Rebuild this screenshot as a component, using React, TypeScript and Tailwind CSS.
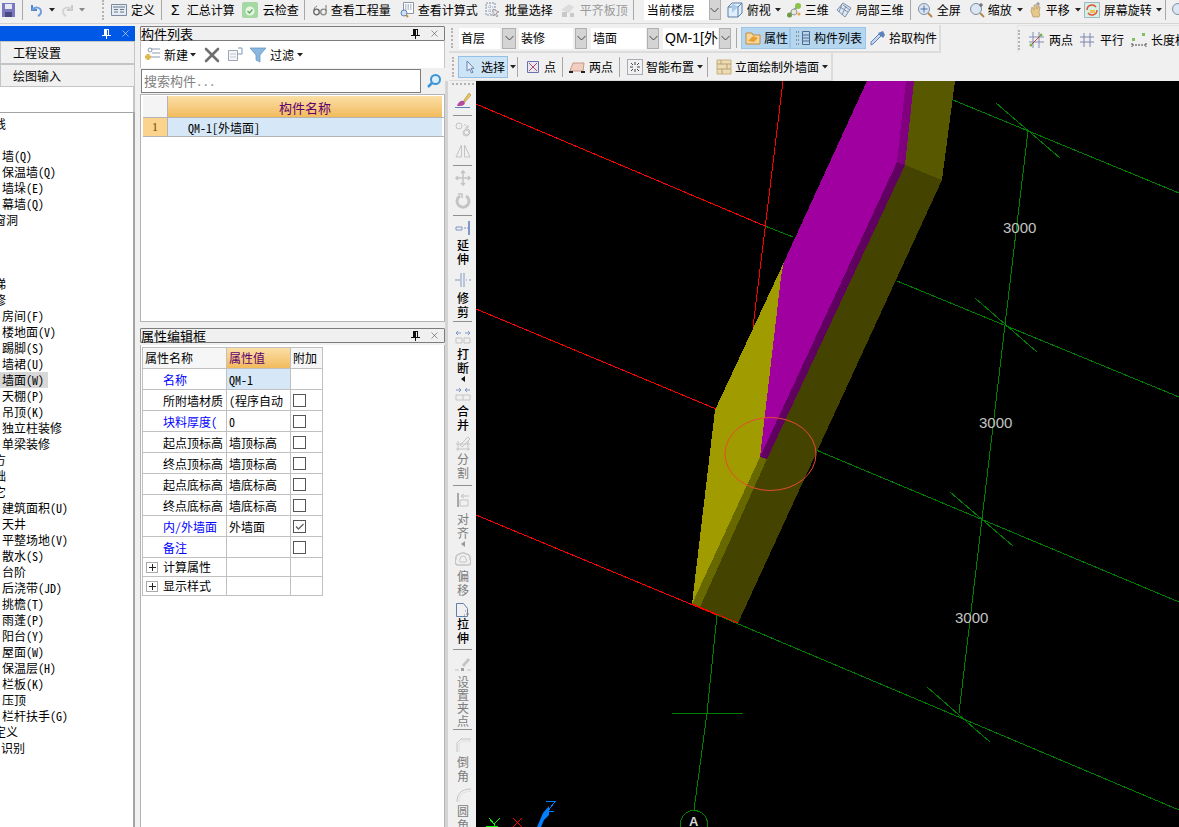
import React from "react";
import { X } from "lucide-react";

type IconProps = { className?: string };

// small helpers for the toolbar drawings
function Ico({ className = "", children }: { className?: string; children: React.ReactNode }) {
  return (
    <svg viewBox="0 0 16 16" className={"w-4 h-4 shrink-0 " + className} fill="none">
      {children}
    </svg>
  );
}

function Caret({ className = "" }: IconProps) {
  return (
    <svg viewBox="0 0 6 4" className={"w-[6px] h-[4px] shrink-0 " + className}>
      <path d="M0 0h6L3 3.5z" fill="#222" />
    </svg>
  );
}

function Sep({ className = "" }: IconProps) {
  return <div className={"w-px h-[20px] bg-[#a8a8a8] shrink-0 " + className} />;
}

function Grip({ className = "" }: IconProps) {
  return <div className={"w-0 h-[20px] border-l-2 border-dotted border-[#b4b4b4] shrink-0 " + className} />;
}

function Pin({ light }: { light?: boolean }) {
  const c = light ? "#fff" : "#111";
  return (
    <svg viewBox="0 0 9 10" className="w-[9px] h-[10px]">
      <path d="M2 0h5v6H2zM0 6h9v1H0zM4 7h1v3H4z" fill={c} />
      <path d="M5 1h1v5H5z" fill={light ? "#0058e6" : "#f0f0f0"} />
    </svg>
  );
}

function Chevron({ className = "" }: IconProps) {
  return (
    <div className={"h-[21px] bg-[#d4d4d4] border border-[#b0b0b0] flex items-center justify-center shrink-0 " + className}>
      <svg viewBox="0 0 9 6" className="w-[9px] h-[6px]">
        <path d="M.5 1l4 4 4-4" stroke="#444" fill="none" />
      </svg>
    </div>
  );
}

const LookGlass = ({ className = "", inner }: { className?: string; inner?: React.ReactNode }) => (
  <Ico className={className}>
    <circle cx="7" cy="7" r="5.5" fill="#dce6f2" stroke="#7c8ea8" />
    <path d="M11 11l4 4" stroke="#b08850" strokeWidth="2" />
    {inner}
  </Ico>
);

const treeRows: [string, number][] = [
  ["线", -6], ["", 0], ["墙(Q)", 2], ["保温墙(Q)", 2], ["墙垛(E)", 2], ["幕墙(Q)", 2], ["窗洞", -6], ["", 0], ["", 0], ["", 0],
  ["梯", -6], ["修", -6], ["房间(F)", 2], ["楼地面(V)", 2], ["踢脚(S)", 2], ["墙裙(U)", 2], ["墙面(W)", 2], ["天棚(P)", 2], ["吊顶(K)", 2],
  ["独立柱装修", 2], ["单梁装修", 2], ["方", -6], ["础", -6], ["它", -6], ["建筑面积(U)", 2], ["天井", 2], ["平整场地(V)", 2], ["散水(S)", 2],
  ["台阶", 2], ["后浇带(JD)", 2], ["挑檐(T)", 2], ["雨蓬(P)", 2], ["阳台(Y)", 2], ["屋面(W)", 2], ["保温层(H)", 2], ["栏板(K)", 2], ["压顶", 2],
  ["栏杆扶手(G)", 2], ["定义", -6], ["识别", 1],
];

const props = [
  { name: "名称", value: "QM-1", blue: true, active: true },
  { name: "所附墙材质", value: "(程序自动", box: true },
  { name: "块料厚度(", value: "0", blue: true, box: true },
  { name: "起点顶标高", value: "墙顶标高", box: true },
  { name: "终点顶标高", value: "墙顶标高", box: true },
  { name: "起点底标高", value: "墙底标高", box: true },
  { name: "终点底标高", value: "墙底标高", box: true },
  { name: "内/外墙面", value: "外墙面", blue: true, box: true, checked: true },
  { name: "备注", value: "", blue: true, box: true },
];

function TopBar() {
  return (
    <div className="h-[24px] flex items-center pb-[4px] border-b border-[#d4d4d4] shrink-0 whitespace-nowrap overflow-hidden">
      <svg viewBox="0 0 13 14" className="w-[13px] h-[14px] ml-[2px] shrink-0">
        <path d="M0 0h13v14H0z" fill="#7a78c0" />
        <path d="M3 1h7v5H3z" fill="#e8e8f4" />
        <path d="M3 9h7v5H3z" fill="#4a4a80" />
      </svg>
      <Sep className="ml-[7px]" />
      <Ico className="ml-[6px]">
        <path d="M3 3v5h5" stroke="#4f86cf" strokeWidth="2" />
        <path d="M3 8c3-4 9-3 9 2 0 2-1 3-3 4" stroke="#6f9ede" strokeWidth="2" />
      </Ico>
      <Caret className="ml-[4px]" />
      <Ico className="ml-[4px]">
        <path d="M13 3v5H8" stroke="#c8c8c8" strokeWidth="2" />
        <path d="M13 8c-3-4-9-3-9 2 0 2 1 3 3 4" stroke="#d4d4d4" strokeWidth="2" />
      </Ico>
      <Caret className="ml-[4px] opacity-50" />
      <Grip className="ml-[17px]" />
      <Ico className="ml-[7px]">
        <path d="M.5 2.5h15v11H.5z" fill="#e4eaf2" stroke="#7d8ba0" />
        <path d="M2 5h12M9 7.5h4M9 10h4M3 7.5h4M3 10h4" stroke="#66768e" />
      </Ico>
      <span className="ml-[4px]">定义</span>
      <Sep className="ml-[6px]" />
      <span className="ml-[9px] w-[10px] font-['Liberation_Sans'] text-[14px] leading-none">Σ</span>
      <span className="ml-[7px]">汇总计算</span>
      <Ico className="ml-[7px]">
        <path d="M0 2a2 2 0 012-2h12a2 2 0 012 2v12a2 2 0 01-2 2H2a2 2 0 01-2-2z" fill="#a6d8a4" />
        <circle cx="8" cy="9" r="4.5" fill="#e8f6e4" />
        <path d="M5.500 9l2 2 3-3.500" stroke="#62ad62" strokeWidth="1.500" />
      </Ico>
      <span className="ml-[5px]">云检查</span>
      <Sep className="ml-[5px]" />
      <Ico className="ml-[7px]">
        <circle cx="4.500" cy="10" r="2.800" stroke="#666" strokeWidth="1.300" />
        <circle cx="11.500" cy="10" r="2.800" stroke="#888" strokeWidth="1.300" />
        <path d="M2 9c0-3 1-4 3-5M14 9V3" stroke="#777" />
      </Ico>
      <span className="ml-[3px]">查看工程量</span>
      <Ico className="ml-[8px]">
        <path d="M4.500.5h10v11h-10z" fill="#fff" stroke="#8a94a8" />
        <path d="M6 3h7M6 5h7M6 7h7" stroke="#7c8ca6" strokeDasharray="1.500 1" />
        <circle cx="5" cy="11" r="3" fill="#cfe0f2" stroke="#5d85b8" />
        <path d="M7 13l2 2" stroke="#c0903a" strokeWidth="2" />
      </Ico>
      <span className="ml-[3px]">查看计算式</span>
      <Ico className="ml-[7px]">
        <path d="M1 1h9v12H1z" stroke="#8494b4" strokeDasharray="2 1" />
        <path d="M1 5h9M1 9h9M5 1v12" stroke="#9aa8c2" strokeDasharray="1 1" />
        <path d="M8 7l6 3-3 1 2 3-1 1-2-3-2 2z" fill="#e6e6ee" stroke="#777" strokeWidth=".6" />
      </Ico>
      <span className="ml-[4px]">批量选择</span>
      <Ico className="ml-[7px]">
        <path d="M1 8l8-6 5 3-5 6z" fill="#dcdcdc" />
        <path d="M2 10h5v5H2zM10 11h4v4h-4z" fill="#c8c8c8" />
      </Ico>
      <span className="ml-[4px] text-[#9a9a9a]">平齐板顶</span>
      <Sep className="ml-[5px]" />
      <div className="ml-[10px] w-[65px] h-[21px] bg-white flex items-center pl-[3px] shrink-0">当前楼层</div>
      <Chevron className="w-[12px]" />
      <Ico className="ml-[6px]">
        <path d="M1 5l4-4h10v10l-4 4H1z" fill="#dfeefa" stroke="#5d7ea8" />
        <path d="M1 5h10v10M11 5l4-4" stroke="#5d7ea8" />
        <path d="M5 1l6 4-6 6z" fill="#a9cbe8" />
      </Ico>
      <span className="ml-[4px]">俯视</span>
      <Caret className="ml-[4px]" />
      <Ico className="ml-[5px]">
        <path d="M2 14L12 4" stroke="#999" strokeWidth="2" />
        <circle cx="12" cy="4" r="3" fill="#8bc34a" />
        <circle cx="3.500" cy="13" r="2.500" fill="#6d9a45" />
        <circle cx="8" cy="10" r="3" fill="#e8e8d8" stroke="#999" />
        <circle cx="13" cy="12" r="1.500" fill="#f0a040" />
      </Ico>
      <span className="ml-[3px]">三维</span>
      <Ico className="ml-[7px]">
        <path d="M1 8l6-7 8 5-6 9z" fill="#dfe8f2" stroke="#7d90aa" />
        <path d="M4 5l8 5M7 3l7 5M6 2l-3 8M10 4l-4 9" stroke="#7d90aa" />
      </Ico>
      <span className="ml-[4px]">局部三维</span>
      <Sep className="ml-[6px]" />
      <LookGlass className="ml-[6px]" inner={<path d="M7 3.500v7M3.500 7h7" stroke="#4a6ea8" />} />
      <span className="ml-[4px]">全屏</span>
      <LookGlass className="ml-[8px]" inner={<path d="M12 1v4M10 3h4" stroke="#555" />} />
      <span className="ml-[3px]">缩放</span>
      <Caret className="ml-[5px]" />
      <Ico className="ml-[5px]">
        <path d="M3 9l1-4 2 3V3l2 0 1 4 1-3 2 1-1 6 1 1-1 3H5z" fill="#e5c88a" stroke="#a88c58" strokeWidth=".6" />
        <path d="M10 0v4M8 2h4" stroke="#888" />
      </Ico>
      <span className="ml-[2px]">平移</span>
      <Caret className="ml-[5px]" />
      <Ico className="ml-[3px]">
        <path d="M.5.5h15v15H.5z" fill="#d6f0e0" stroke="#9bb8c8" />
        <path d="M3 8a5 5 0 019-3M13 8a5 5 0 01-9 3" stroke="#e0503c" strokeWidth="1.400" />
        <path d="M6 8h5v3H6z" fill="#f0c050" />
      </Ico>
      <span className="ml-[4px]">屏幕旋转</span>
      <Caret className="ml-[4px]" />
      <Sep className="ml-[3px]" />
      <LookGlass className="ml-[5px]" />
    </div>
  );
}

function LeftPanel() {
  return (
    <div className="w-[135px] shrink-0 flex flex-col pt-[2px]">
      <div className="h-[15px] bg-[#0058e6] flex items-center justify-end gap-[9px] pr-[4px] shrink-0">
        <Pin light />
        <X size={11} strokeWidth={1.2} color="#fff" />
      </div>
      <div className="h-[23px] flex items-center pl-[12px] border border-[#c4c4c4] shrink-0">工程设置</div>
      <div className="h-[23px] flex items-center pl-[12px] border border-[#c4c4c4] shrink-0">绘图输入</div>
      <div className="h-[25px] bg-white border-r-2 border-[#c4c4c4] shrink-0" />
      <div className="flex-1 bg-white border-t border-r-2 border-[#a4a4a4] pt-[3px] overflow-hidden">
        {treeRows.map(([label, x], i) =>
          label === "墙面(W)" ? (
            <div key={i} className="h-4 w-[48px] bg-[#d8d8d8] flex items-center pl-[2px] whitespace-nowrap">{label}</div>
          ) : (
            <div key={i} className="h-4 flex items-center whitespace-nowrap">
              {x === -6 && <span className="-ml-[6px]">{label}</span>}
              {x === 2 && <span className="ml-[2px]">{label}</span>}
              {x === 1 && <span className="ml-px">{label}</span>}
            </div>
          )
        )}
      </div>
    </div>
  );
}

function PanelTitle({ title }: { title: string }) {
  return (
    <div className="h-[15px] bg-[#f0f0f0] border border-[#7c7c7c] rounded-[1px] flex items-center justify-between pr-[4px] shrink-0">
      <span className="leading-none text-[13px]">{title}</span>
      <div className="flex items-center gap-[9px]">
        <Pin />
        <X size={11} strokeWidth={1.1} color="#333" />
      </div>
    </div>
  );
}

function MiddlePanel() {
  return (
    <div className="w-[305px] ml-[5px] shrink-0 flex flex-col pt-[2px]">
      <PanelTitle title="构件列表" />
      <div className="h-[27px] bg-white flex items-center shrink-0 border-x border-[#c4c4c4]">
        <Ico className="ml-[4px]">
          <path d="M6 2h9M7 6h8M6 10h9" stroke="#8b9ab0" />
          <circle cx="5" cy="3" r="2" stroke="#8b9ab0" />
          <path d="M3 7v6M0 10h6" stroke="#e0b84a" strokeWidth="3" />
        </Ico>
        <span className="ml-[3px]">新建</span>
        <Caret className="ml-[2px]" />
        <X size={24} strokeWidth={2.6} color="#707070" className="ml-[4px] shrink-0" />
        <Ico className="ml-[3px]">
          <path d="M1.500 3.500h9v10h-9z" stroke="#9aa4b4" fill="#f6f6f8" />
          <path d="M3 7h6M3 10h6" stroke="#c0c6d0" />
          <path d="M11 1h4v6h-4" stroke="#7f96bc" />
        </Ico>
        <svg viewBox="0 0 16 16" className="w-4 h-4 ml-[7px] shrink-0">
          <path d="M0 1h16l-6 7v7l-4-2V8z" fill="#8ab8de" stroke="#5d8ec0" strokeWidth=".7" />
        </svg>
        <span className="ml-[4px]">过滤</span>
        <Caret className="ml-[3px]" />
      </div>
      <div className="h-[26px] flex items-center shrink-0 bg-[#f0f0f0]">
        <div className="ml-px w-[280px] h-[24px] bg-white border border-[#7c7c7c] flex items-center pl-[2px] pb-[2px] text-[13px] text-[#808080]">搜索构件...</div>
        <svg viewBox="0 0 16 16" className="w-4 h-4 ml-[5px] shrink-0">
          <circle cx="9.500" cy="6.500" r="4.500" fill="#dceefa" stroke="#3f94d6" strokeWidth="2" />
          <path d="M6 10l-4 4" stroke="#3f94d6" strokeWidth="2.500" />
        </svg>
      </div>
      <div className="h-[228px] bg-white border border-[#b4b4b4] pl-[2px] pt-px shrink-0">
        <div className="flex h-[22px] border-b border-[#b4b4b4]">
          <div className="w-[25px] bg-[#f4f4f4] border-r border-[#b4b4b4]" />
          <div className="w-[274px] bg-gradient-to-b from-[#fbdfa6] to-[#f2bb5c] flex items-center justify-center pt-px text-[#5f0070] text-[13px]">构件名称</div>
        </div>
        <div className="flex h-[19px] border-b border-[#b4b4b4]">
          <div className="w-[25px] bg-[#fbd38d] border-r border-[#b4b4b4] flex items-center justify-center font-['Liberation_Serif'] text-[#6a4400]">1</div>
          <div className="w-[274px] bg-[#d6e8f7] flex items-center pl-[20px] pt-px">QM-1[外墙面]</div>
        </div>
      </div>
      <div className="h-[6px] shrink-0" />
      <PanelTitle title="属性编辑框" />
      <div className="flex-1 bg-white border-x border-[#b4b4b4] mt-[2px] pl-px pt-[2px] overflow-hidden">
        <div className="w-[181px] border-l border-t border-[#c0c0c0]">
          <div className="flex h-[21px] border-b border-[#c0c0c0]">
            <div className="w-[84px] bg-[#f6f6f6] border-r border-[#c0c0c0] flex items-center pl-[2px]">属性名称</div>
            <div className="w-[64px] bg-gradient-to-b from-[#fbdfa6] to-[#f2bb5c] border-r border-[#c0c0c0] flex items-center pl-[2px] text-[#5f0070]">属性值</div>
            <div className="w-[32px] bg-[#f6f6f6] border-r border-[#c0c0c0] flex items-center pl-[2px]">附加</div>
          </div>
          {props.map((p) => (
            <div key={p.name} className="flex h-[21px] border-b border-[#c0c0c0]">
              <div className={"w-[84px] border-r border-[#c0c0c0] flex items-center pl-[20px] pt-px whitespace-nowrap " + (p.blue ? "text-[#0000ff]" : "")}>{p.name}</div>
              <div className={"w-[64px] border-r border-[#c0c0c0] flex items-center pl-[2px] pt-px whitespace-nowrap overflow-hidden " + (p.active ? "bg-[#d6e8f7]" : "")}>{p.value}</div>
              <div className="w-[32px] border-r border-[#c0c0c0] flex items-center pl-[2px] pt-px">
                {p.box && (
                  <div className="w-[13px] h-[13px] border border-[#555] flex items-center justify-center">
                    {p.checked && (
                      <svg viewBox="0 0 11 11" className="w-[11px] h-[11px]">
                        <path d="M2 5.500l2.500 2.500 5-5" stroke="#666" strokeWidth="1.400" fill="none" />
                      </svg>
                    )}
                  </div>
                )}
              </div>
            </div>
          ))}
          {["计算属性", "显示样式"].map((n) => (
            <div key={n} className="flex h-[19px] border-b border-[#c0c0c0]">
              <div className="w-[84px] border-r border-[#c0c0c0] flex items-center pl-[3px]">
                <div className="w-[12px] h-[11px] border border-[#aaa] flex items-center justify-center leading-none">
                  <svg viewBox="0 0 7 7" className="w-[7px] h-[7px]">
                    <path d="M3 0h1v7H3zM0 3h7v1H0z" fill="#222" />
                  </svg>
                </div>
                <span className="ml-[5px]">{n}</span>
              </div>
              <div className="w-[64px] border-r border-[#c0c0c0]" />
              <div className="w-[32px] border-r border-[#c0c0c0]" />
            </div>
          ))}
        </div>
      </div>
    </div>
  );
}

function ToolRows() {
  return (
    <div className="shrink-0 whitespace-nowrap">
      <div className="h-[29px] flex pt-[1px] pl-[4px] overflow-hidden">
        <div className="w-[492px] h-[28px] flex items-center border-r-2 border-b-2 border-[#dcdcdc] shrink-0">
          <Grip className="ml-[2px]" />
          <div className="ml-[6px] w-[41px] h-[21px] bg-white flex items-center pl-[2px] shrink-0">首层</div>
          <Chevron className="ml-[2px] w-[14px]" />
          <div className="ml-[3px] w-[54px] h-[21px] bg-white flex items-center pl-[2px] shrink-0">装修</div>
          <Chevron className="ml-[2px] w-[12px]" />
          <div className="ml-[4px] w-[55px] h-[21px] bg-white flex items-center pl-[2px] shrink-0">墙面</div>
          <Chevron className="ml-px w-[12px]" />
          <div className="ml-[4px] w-[55px] h-[21px] bg-white flex items-center pl-[2px] shrink-0 font-['Liberation_Sans','Noto_Sans_CJK_SC',sans-serif] text-[14px]">QM-1[外</div>
          <Chevron className="ml-px w-[12px]" />
          <Sep className="ml-[5px]" />
          <div className="ml-[4px] w-[49px] h-[22px] bg-[#b5d6ef] border border-[#9cc6e8] flex items-center shrink-0">
            <Ico className="ml-[3px]">
              <path d="M1 3h6l1 2h7v9H1z" fill="#f4d8a0" stroke="#c88a3a" />
              <path d="M3 11l5-5 5 2-4 4z" fill="#e8a030" />
            </Ico>
            <span className="ml-[3px]">属性</span>
          </div>
          <div className="w-[76px] h-[22px] bg-[#b5d6ef] border border-[#9cc6e8] flex items-center shrink-0">
            <Ico className="ml-[4px]">
              <path d="M1 2h3M1 6h3M1 10h3M1 14h3" stroke="#555" strokeDasharray="1 1" />
              <path d="M7.500 1.500h7v13h-7zM8 5h6M8 8h6M8 11h6" stroke="#55698a" />
            </Ico>
            <span className="ml-[3px]">构件列表</span>
          </div>
          <svg viewBox="0 0 16 16" className="w-4 h-4 ml-[4px] shrink-0">
            <path d="M1 15l2-1 8-8-2-2-8 8z" fill="#c4d6ee" stroke="#5f83b8" />
            <path d="M8 3l5 5 2-3-2-4z" fill="#5f83b8" />
          </svg>
          <span className="ml-[3px]">拾取构件</span>
        </div>
        <div className="ml-[76px] flex-1 h-[28px] flex items-center border-l border-t border-[#e4e4e4]">
          <Grip />
          <Ico className="ml-[8px]">
            <path d="M1 10h15M1 5h15M5 0v16M11 0v16" stroke="#8090b8" />
            <path d="M2 14L14 2" stroke="#c04a3a" />
            <circle cx="3" cy="13" r="1.500" fill="#78b048" />
            <circle cx="13" cy="3" r="1.500" fill="#78b048" />
          </Ico>
          <span className="ml-[5px]">两点</span>
          <Ico className="ml-[7px]">
            <path d="M0 5h14M0 10h14M4 1v14M10 1v14" stroke="#7a84ac" />
          </Ico>
          <span className="ml-[4px]">平行</span>
          <Ico className="ml-[7px]">
            <path d="M1 11v4M15 11v4M1 13h14" stroke="#444" strokeDasharray="2 1" />
            <rect x="1" y="6" width="3" height="3" fill="#80c060" />
            <rect x="11" y="1" width="3" height="3" fill="#80c060" />
          </Ico>
          <span className="ml-[4px]">长度标注</span>
        </div>
      </div>
      <div className="h-[28px] pl-[4px] flex">
        <div className="w-[384px] h-[28px] flex items-center border-r-2 border-b border-[#dcdcdc] shrink-0">
          <Grip className="ml-[3px]" />
          <div className="ml-[4px] w-[50px] h-[22px] bg-[#cde4f7] border border-[#94c0e8] flex items-center pt-px shrink-0">
            <svg viewBox="0 0 12 14" className="ml-[5px] w-[12px] h-[14px]">
              <path d="M3 1v10l2.500-2 2 4 1.500-.7-2-4h3z" fill="#e8eef8" stroke="#6a84b0" />
            </svg>
            <span className="ml-[5px]">选择</span>
          </div>
          <Caret className="ml-[2px]" />
          <Sep className="ml-px" />
          <svg viewBox="0 0 12 12" className="ml-[9px] w-[12px] h-[12px] shrink-0">
            <path d="M.5.5h11v11H.5z" fill="#e8e8f4" stroke="#6a70b0" />
            <path d="M2 2l8 8M10 2l-8 8" stroke="#b04a60" />
          </svg>
          <span className="ml-[5px]">点</span>
          <Sep className="ml-[6px]" />
          <Ico className="ml-[6px]">
            <path d="M1 12l3-8h11l-1 8z" fill="#f0cfc0" stroke="#c89a88" />
            <path d="M0 13h4M12 13h4" stroke="#222" strokeWidth="2" />
          </Ico>
          <span className="ml-[4px]">两点</span>
          <Sep className="ml-[6px]" />
          <Ico className="ml-[7px]">
            <path d="M.5.5h15v15H.5z" stroke="#667" strokeDasharray="1 1" />
            <path d="M8 3v3M8 10v3M3 8h3M10 8h3M4 4l2 2M12 4l-2 2M4 12l2-2M12 12l-2-2" stroke="#445" />
          </Ico>
          <span className="ml-[3px]">智能布置</span>
          <Caret className="ml-[3px]" />
          <Sep className="ml-[4px]" />
          <Ico className="ml-[8px]">
            <path d="M1 1h14v14H1z" fill="#ecdcb4" stroke="#c8b080" />
            <path d="M1 5h14M1 10h14M5 1v4M11 5v5M6 10v5" stroke="#b8a070" />
          </Ico>
          <span className="ml-[3px]">立面绘制外墙面</span>
          <Caret className="ml-[3px]" />
        </div>
      </div>
    </div>
  );
}

function VLabel({ text, off, tight, className = "" }: { text: string; off?: boolean; tight?: boolean; className?: string }) {
  return (
    <div className={"[writing-mode:vertical-rl] leading-none whitespace-nowrap shrink-0 " + (tight ? "tracking-[1px] " : "tracking-[2px] ") + (off ? "text-[#7c7c7c] " : "text-black font-medium ") + className}>
      {text}
    </div>
  );
}

function VSep({ className = "" }: IconProps) {
  return <div className={"w-[19px] h-px bg-[#909090] shrink-0 " + className} />;
}

function VArrow({ off }: { off?: boolean }) {
  return (
    <svg viewBox="0 0 4 6" className="w-[4px] h-[6px] shrink-0 mb-[-1px]">
      <path d="M4 0v6L0 3z" fill={off ? "#999" : "#111"} />
    </svg>
  );
}

function VToolbar() {
  const g = "#c4c4c4";
  const b = "#7f97c4";
  return (
    <div className="w-[31px] shrink-0 border-l-[3px] border-[#d4d4d4] pl-[1px] flex flex-col items-center overflow-hidden h-full">
      <div className="w-[22px] h-0 border-t-2 border-dotted border-[#b4b4b4] mt-[2px] shrink-0" />
      <Ico className="mt-[7px]">
        <path d="M9 8l5-7 2 2-6 7z" fill="#e6c45a" stroke="#a08030" strokeWidth=".5" />
        <path d="M2 14c1-4 4-6 7-5l1 2c-1 3-4 3-8 3z" fill="#b34a9c" />
        <path d="M0 15.500h15" stroke="#5f7fb8" />
      </Ico>
      <VSep className="mt-[7px]" />
      <Ico className="mt-[6px]">
        <circle cx="4" cy="4" r="3" stroke={g} />
        <circle cx="11" cy="11" r="3" stroke={g} />
        <circle cx="12" cy="10" r="3" stroke={g} />
        <path d="M9 2l4 4M13 3v3h-3" stroke={g} />
      </Ico>
      <Ico className="mt-[5px]">
        <path d="M6.500 2v12H1zM9.500 2v12H15z" stroke={g} />
      </Ico>
      <VSep className="mt-[6px]" />
      <Ico className="mt-[4px]">
        <path d="M8 1v14M1 8h14M6 3l2-2 2 2M6 13l2 2 2-2M3 6L1 8l2 2M13 6l2 2-2 2" stroke={g} strokeWidth="1.500" />
      </Ico>
      <Ico className="mt-[7px]">
        <path d="M11 3a6 6 0 11-6 0" stroke={g} strokeWidth="3" />
        <path d="M3 1h4v4" stroke={g} strokeWidth="1.500" />
      </Ico>
      <VSep className="mt-[6px]" />
      <Ico className="mt-[4px]">
        <path d="M1 7h6v3H1z" stroke={b} />
        <path d="M9 8h2M12 8h1" stroke={b} />
        <path d="M14 1v14" stroke={b} strokeWidth="2" />
      </Ico>
      <VLabel text="延伸" className="mt-[3px]" />
      <Ico className="mt-[5px]">
        <path d="M6 1v14M9 1v14" stroke={b} />
        <path d="M0 8h5M11 8h1M14 8h2" stroke={b} />
      </Ico>
      <VLabel text="修剪" className="mt-[4px]" />
      <VSep className="mt-px" />
      <Ico className="mt-[7px]">
        <path d="M1 4h5M10 4h5M1 4l2-2M1 4l2 2M15 4l-2-2M15 4l-2 2" stroke={b} />
        <path d="M1 9h6v5H1zM9 9h6v5H9z" stroke={g} />
      </Ico>
      <VLabel text="打断" className="mt-[3px]" />
      <VArrow />
      <Ico className="mt-[5px]">
        <path d="M1 4h5M10 4h5M6 4L4 2M6 4L4 6M10 4l2-2M10 4l2 2" stroke={b} />
        <path d="M1 9h14v5H1zM8 9v5" stroke={g} />
      </Ico>
      <VLabel text="合并" className="mt-[3px]" />
      <Ico className="mt-[3px]">
        <path d="M1 8h14M1 13h14M3 5v10M13 5v10" stroke={g} />
        <path d="M5 9l8-8 2 2-8 8z" stroke={g} />
      </Ico>
      <VLabel text="分割" off className="mt-px" />
      <VSep className="mt-[4px]" />
      <Ico className="mt-[6px]">
        <path d="M3 1v14" stroke="#a8a8a8" strokeWidth="2" />
        <path d="M5 8h8v6H5zM6 4h8M6 4l3-2M6 4l3 2" stroke={g} />
      </Ico>
      <VLabel text="对齐" off className="mt-[5px]" />
      <VArrow off />
      <Ico className="mt-[5px]">
        <path d="M2 14a4 4 0 01-1-6 4 4 0 014-5 4 4 0 016 0 4 4 0 014 5 4 4 0 01-1 6z" stroke={g} strokeWidth="1.500" />
        <path d="M5 11a2 2 0 010-3 3 3 0 016 0 2 2 0 010 3z" stroke={g} />
      </Ico>
      <VLabel text="偏移" off className="mt-[3px]" />
      <Ico className="mt-[4px]">
        <path d="M1.500 1.500h7l4 5v8h-11z" stroke="#5f7fa8" />
        <path d="M10 9h1M11 12h3M9 13h1" stroke="#888" />
      </Ico>
      <VLabel text="拉伸" />
      <VSep className="mt-[3px]" />
      <Ico className="mt-[6px]">
        <path d="M7 9l6-7 2 2-6 7z" fill={g} />
        <path d="M0 14h4M12 14h4" stroke={g} />
        <path d="M6 12h3v3H6z" fill="#a0a0a0" />
      </Ico>
      <VLabel text="设置夹点" off tight className="mt-[4px]" />
      <VSep className="mt-px" />
      <Ico className="mt-[7px]">
        <path d="M2 15V6l4-4h10" stroke={g} />
        <path d="M4 15V7l3-3h9" stroke="#dedede" />
      </Ico>
      <VLabel text="倒角" off className="mt-[3px]" />
      <Ico className="mt-[3px]">
        <path d="M2 15c0-8 4-13 14-13" stroke={g} />
        <path d="M4 15c0-7 3-10 12-11" stroke="#dedede" />
      </Ico>
      <VLabel text="圆角" off className="mt-[2px]" />
    </div>
  );
}

function Canvas() {
  const green = "#008000";
  const red = "#ff0000";
  const labelCls = "font-['Liberation_Sans'] text-[15px]";
  return (
    <div className="flex-1 bg-black overflow-hidden">
      <svg viewBox="476 81 703 746" className="block w-full h-full">
        <g shapeRendering="crispEdges" fill="none">
          <path d="M953 100L1179 193M765 226L793 237M897 281L1179 397M816 450L1179 602M717 615L1179 810" stroke={green} />
          <path d="M1028 131L959 713M717 615L707 713L694 810" stroke={green} />
          <path d="M996 103L1060 158M975 298L1037 352M950 492L1013 546M927 687L990 742M672 713.500H743" stroke={green} />
          <path d="M476 104L765 226M476 309L716 409M476 515L717 615M783 81L753 327" stroke={red} />
          <path d="M867 81H906L897 162L760 457L781 277L784 262Z" fill="#a000a0" />
          <path d="M906 81H914L905 165L897 162Z" fill="#800080" />
          <path d="M897 162L905 165L767 459L760 457Z" fill="#600060" />
          <path d="M914 81H955L942 180L905 165Z" fill="#585800" />
          <path d="M905 165L942 180L738 623L700 607L767 459Z" fill="#444400" />
          <path d="M760 457L767 459L700 607L692 604Z" fill="#686800" />
          <path d="M784 262L715 410L692 604L760 457L781 277Z" fill="#a09c00" />
          <path d="M692 604L738 623" stroke={red} />
        </g>
        <ellipse cx="770.500" cy="454" rx="45.500" ry="36.500" fill="none" stroke="#e84a30" />
        <text x="1003" y="233" fill="#c4c4c4" className={labelCls}>3000</text>
        <text x="979" y="428" fill="#c4c4c4" className={labelCls}>3000</text>
        <text x="955" y="623" fill="#c4c4c4" className={labelCls}>3000</text>
        <g shapeRendering="crispEdges" fill="none">
          <circle cx="694" cy="824" r="13.500" stroke={green} />
          <path d="M489 818L494 824L500 818M494 824V827M486 826.500H498" stroke="#00ff00" />
          <path d="M513 818L522 827M522 818L513 827" stroke={red} />
          <path d="M546 801.500H555L548 811M546 811.500H554" stroke="#0080ff" />
        </g>
        <path d="M537 827L543 813L549 806L549 815L544 820L541 827Z" fill="#0080ff" />
        <text x="689" y="826" fill="#d8d8d8" className="font-['Liberation_Sans'] text-[13px] font-bold">A</text>
      </svg>
    </div>
  );
}

export default function App() {
  return (
    <div className="w-[1179px] h-[827px] overflow-hidden bg-[#f0f0f0] flex flex-col text-[12px] leading-none text-black font-['Noto_Sans_CJK_SC','Liberation_Sans',sans-serif] [font-feature-settings:'hwid']">
      <TopBar />
      <div className="flex-1 flex min-h-0">
        <LeftPanel />
        <MiddlePanel />
        <div className="flex-1 flex flex-col min-w-0">
          <ToolRows />
          <div className="flex-1 flex min-h-0">
            <VToolbar />
            <Canvas />
          </div>
        </div>
      </div>
    </div>
  );
}
